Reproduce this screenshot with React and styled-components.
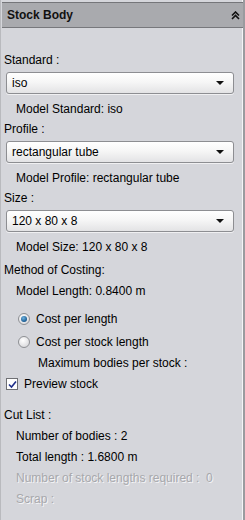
import React from 'react';
import styled, { createGlobalStyle } from 'styled-components';

const GlobalStyle = createGlobalStyle`
    html, body {
        margin: 0;
        padding: 0;
        background: #d5d6db;
    }
    body {
        font-family: "Liberation Sans", Arial, sans-serif;
        font-size: 12px;
        color: #000;
    }
`;

const Frame = styled.div`
    width: 245px;
    height: 520px;
    box-sizing: border-box;
    display: flex;
    flex-direction: column;
    background: #d5d6db;
    border-left: 1px solid #b9babe;
    border-right: 2px solid #9a9b9f;
    box-shadow: inset -1px 0 0 #f4f4f6;
    padding-top: 2px;
    overflow: hidden;
`;

const Header = styled.div`
    height: 24px;
    display: flex;
    align-items: center;
    justify-content: space-between;
    padding: 0 3px 0 5px;
    background: #a9aaae;
    border-top: 1px solid #75767a;
    border-bottom: 1px solid #77787c;
    margin-left: 1px;

    .title {
        font-weight: bold;
        font-size: 12px;
        color: #111;
    }
`;

const Content = styled.div`
    display: flex;
    flex-direction: column;
    padding: 22px 9px 0 3px;
`;

const Label = styled.div`
    height: 21px;
    line-height: 21px;
    padding-left: ${p => p.indent || 0}px;
    color: ${p => (p.disabled ? '#a7a8ac' : '#000')};
    text-shadow: ${p => (p.disabled ? '1px 1px 0 #f4f4f6' : 'none')};
    margin-top: ${p => p.gap || 0}px;
    white-space: pre;
`;

const Select = styled.div`
    height: 22px;
    margin: 1px 0 5px 2px;
    box-sizing: border-box;
    display: flex;
    align-items: center;
    justify-content: space-between;
    padding: 0 9px 0 5px;
    border: 1px solid #8d8e92;
    border-radius: 3px;
    background: linear-gradient(#ffffff 0%, #f6f6f6 45%, #e3e3e5 100%);
    box-shadow: 0 1px 0 #f0f0f2;
`;

const Arrow = styled.span`
    width: 0;
    height: 0;
    border-left: 4px solid transparent;
    border-right: 4px solid transparent;
    border-top: 4px solid #111;
`;

const OptionRow = styled.div`
    height: ${p => p.h || 23}px;
    display: flex;
    align-items: center;
    gap: 6px;
    padding-left: ${p => p.indent || 0}px;
    margin-top: ${p => p.gap || 0}px;
`;

const Radio = styled.span`
    width: 12px;
    height: 12px;
    border-radius: 50%;
    box-sizing: border-box;
    border: 1px solid #8e9094;
    background: radial-gradient(circle at 40% 35%, #ffffff, #d9d9dc 80%);
    display: flex;
    align-items: center;
    justify-content: center;

    &::after {
        content: '';
        width: 6px;
        height: 6px;
        border-radius: 50%;
        display: ${p => (p.checked ? 'block' : 'none')};
        background: radial-gradient(circle at 40% 35%, #6fb3e0, #0d4e86 80%);
    }
`;

const Check = styled.span`
    width: 12px;
    height: 12px;
    box-sizing: border-box;
    border: 1px solid #6f7074;
    background: #fff;
    display: flex;
    align-items: center;
    justify-content: center;
`;

function Dropdown({ value }) {
    return (
        <Select>
            <span>{value}</span>
            <Arrow />
        </Select>
    );
}

function Chevrons() {
    return (
        <svg width="9" height="9" viewBox="0 0 9 9">
            <path d="M1 4.5 L4.5 1 L8 4.5 M1 8 L4.5 4.5 L8 8" stroke="#111" strokeWidth="1.6" fill="none" />
        </svg>
    );
}

export default function App() {
    return (
        <>
            <GlobalStyle />
            <Frame>
                <Header>
                    <span className="title">Stock Body</span>
                    <Chevrons />
                </Header>
                <Content>
                    <Label>Standard :</Label>
                    <Dropdown value="iso" />
                    <Label indent={12}>Model Standard: iso</Label>
                    <Label gap={-1}>Profile :</Label>
                    <Dropdown value="rectangular tube" />
                    <Label indent={12}>Model Profile: rectangular tube</Label>
                    <Label gap={-1}>Size :</Label>
                    <Dropdown value="120 x 80 x 8" />
                    <Label indent={12}>Model Size: 120 x 80 x 8</Label>
                    <Label gap={2}>Method of Costing:</Label>
                    <Label indent={12}>Model Length: 0.8400 m</Label>
                    <OptionRow indent={14} gap={5}>
                        <Radio checked />
                        <span>Cost per length</span>
                    </OptionRow>
                    <OptionRow indent={14}>
                        <Radio />
                        <span>Cost per stock length</span>
                    </OptionRow>
                    <Label indent={34}>Maximum bodies per stock :</Label>
                    <OptionRow indent={2} h={20}>
                        <Check>
                            <svg width="9" height="9" viewBox="0 0 9 9">
                                <path d="M1 4.5 L3.5 7 L8 1.5" stroke="#1f2f8a" strokeWidth="1.6" fill="none" />
                            </svg>
                        </Check>
                        <span>Preview stock</span>
                    </OptionRow>
                    <Label gap={11}>Cut List :</Label>
                    <Label indent={12}>Number of bodies : 2</Label>
                    <Label indent={12}>Total length : 1.6800 m</Label>
                    <Label indent={12} disabled>Number of stock lengths required :  0</Label>
                    <Label indent={12} disabled>Scrap :</Label>
                </Content>
            </Frame>
        </>
    );
}
